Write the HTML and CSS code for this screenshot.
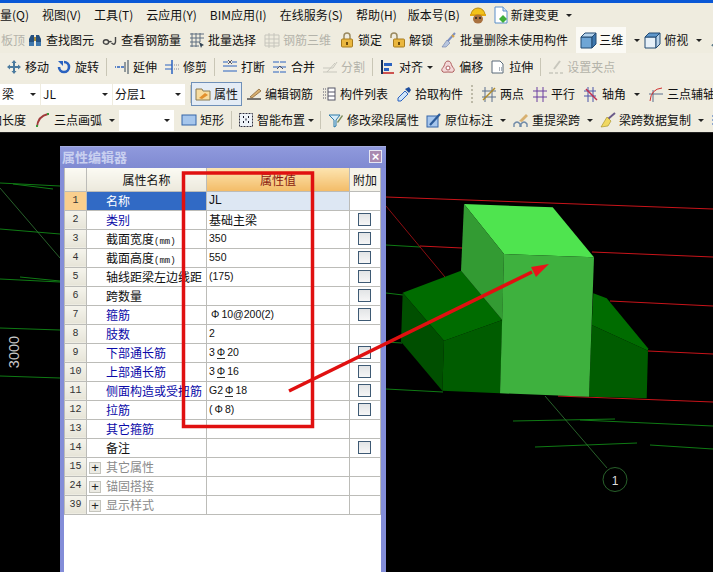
FILE: index.html
```html
<!DOCTYPE html>
<html lang="zh">
<head>
<meta charset="utf-8">
<title>属性编辑器</title>
<link rel="stylesheet" href="styles.css">
</head>
<body>
<svg class="defs" width="0" height="0">
  <symbol id="i-helmet" viewBox="0 0 18 18"><path d="M2 9a7 7 0 0 1 14 0z" fill="#f2c21a" stroke="#b98a10"/><rect x="1" y="8" width="16" height="2" fill="#e2a80f"/><ellipse cx="9" cy="13" rx="5" ry="4.5" fill="#a9713f"/><circle cx="7" cy="12" r="1" fill="#222"/><circle cx="11" cy="12" r="1" fill="#222"/></symbol>
  <symbol id="i-doc" viewBox="0 0 18 18"><path d="M3 1h8l4 4v12H3z" fill="#fff" stroke="#5b8fc9"/><path d="M11 1v4h4" fill="#cfe0f2" stroke="#5b8fc9"/><path d="M11 9l4 4-4 4-4-4z" fill="#3fae3a"/></symbol>
  <symbol id="i-binoc" viewBox="0 0 16 16"><path d="M2 14V7l2-4h3v11zM14 14V7l-2-4H9v11z" fill="#25507f"/><rect x="7" y="5" width="2" height="4" fill="#a88a3a"/><rect x="2" y="10" width="5" height="4" fill="#3f78ad"/><rect x="9" y="10" width="5" height="4" fill="#3f78ad"/></symbol>
  <symbol id="i-glass" viewBox="0 0 16 16"><g fill="none" stroke="#444" stroke-width="1.4"><ellipse cx="4" cy="10" rx="2.6" ry="2.2"/><path d="M6.500 10q2-1 3 0"/><path d="M9.500 11q3 3 4-1l0-5"/></g></symbol>
  <symbol id="i-select" viewBox="0 0 16 16"><g fill="none" stroke="#5f6f80"><path d="M1 2h14M1 6h14M1 10h10M1 14h9M3 1v14M7 1v14M11 1v9"/></g><path d="M10 10l5 3-2 1-1 2z" fill="#345"/></symbol>
  <symbol id="i-grid" viewBox="0 0 16 16"><g fill="none" stroke="#c6c5bc"><path d="M1 3h14v11H1zM1 7h14M1 11h14M5 1v15M10 1v15"/></g></symbol>
  <symbol id="i-lock" viewBox="0 0 16 16"><path d="M5 7V4a3 3 0 0 1 6 0v3" fill="none" stroke="#9a8a60" stroke-width="1.500"/><rect x="2.500" y="7" width="11" height="8" rx="1" fill="#eab73f" stroke="#a87c1e"/><rect x="7" y="10" width="2" height="3" fill="#6b4b0c"/></symbol>
  <symbol id="i-unlock" viewBox="0 0 16 16"><path d="M1 6V4a3 3 0 0 1 6 0v3" fill="none" stroke="#9a8a60" stroke-width="1.500"/><rect x="3.500" y="7" width="11" height="8" rx="1" fill="#eab73f" stroke="#a87c1e"/><rect x="8" y="10" width="2" height="3" fill="#6b4b0c"/></symbol>
  <symbol id="i-broom" viewBox="0 0 16 16"><path d="M14 1L6 10" stroke="#7b8fc2" stroke-width="2"/><path d="M6 8l3 3-4 4H1z" fill="#b7c5de" stroke="#6b7ea8" stroke-width=".6"/><path d="M11 3l2 2" stroke="#d4a24a" stroke-width="2"/></symbol>
  <symbol id="i-cube" viewBox="0 0 18 18"><path d="M1 6h11v11H1z" fill="#6fa6d6" stroke="#234a72"/><path d="M1 6l4-4h11l-4 4z" fill="#b5d3ec" stroke="#234a72"/><path d="M12 6l4-4v11l-4 4z" fill="#3d77ad" stroke="#234a72"/></symbol>
  <symbol id="i-cube2" viewBox="0 0 18 18"><path d="M1 6h11v11H1z" fill="#e6f0f8" stroke="#234a72"/><path d="M1 6l4-4h11l-4 4z" fill="#5f97cb" stroke="#234a72"/><path d="M12 6l4-4v11l-4 4z" fill="#b9d3ea" stroke="#234a72"/></symbol>
  <symbol id="i-green" viewBox="0 0 16 16"><circle cx="9" cy="6" r="5" fill="#4aa648"/><path d="M6 9l-4 5" stroke="#5a7a8a" stroke-width="2"/></symbol>
  <symbol id="i-move" viewBox="0 0 16 16"><path d="M8 1l2.500 3H9v3h3V5.500L15 8l-3 2.500V9H9v3h1.500L8 15l-2.500-3H7V9H4v1.500L1 8l3-2.500V7h3V4H5.500z" fill="#4b7a9e"/></symbol>
  <symbol id="i-rotate" viewBox="0 0 16 16"><path d="M8 3a5 5 0 1 1-5 5" fill="none" stroke="#2a62c0" stroke-width="2.600"/><path d="M2 2l5 0 0 5z" fill="#2a62c0"/></symbol>
  <symbol id="i-extend" viewBox="0 0 16 16"><path d="M10 8H1" stroke="#2a62c0" stroke-width="1.500" stroke-dasharray="3 1"/><path d="M11 3v10M14 1v14" stroke="#345" fill="none"/></symbol>
  <symbol id="i-trim" viewBox="0 0 16 16"><path d="M1 6h7M1 10h7" stroke="#2a62c0"/><path d="M8 1v14" stroke="#2a62c0" stroke-width="1.500"/><path d="M10 6h5M10 10h5" stroke="#889" stroke-dasharray="1 1"/></symbol>
  <symbol id="i-break" viewBox="0 0 16 16"><path d="M1 3h5M10 3h5M1 7h14M1 12h14" stroke="#2a62c0" fill="none"/><path d="M6 1l2 2-2 2M10 1L8 3l2 2" fill="none" stroke="#556"/></symbol>
  <symbol id="i-merge" viewBox="0 0 16 16"><path d="M1 3h14M1 8h14M1 13h14" stroke="#2a62c0" stroke-dasharray="6 1"/><path d="M5 10l3-3 3 3" fill="none" stroke="#556"/></symbol>
  <symbol id="i-split" viewBox="0 0 16 16"><path d="M1 13h14M1 9h10l4-6M5 13l8-9" stroke="#c8c7bd" fill="none"/></symbol>
  <symbol id="i-align" viewBox="0 0 16 16"><path d="M2 1v14" stroke="#14305a" stroke-width="2"/><rect x="4" y="4" width="8" height="3" fill="#2a62c0"/><path d="M3 14h11" stroke="#c02020" stroke-width="1.500"/><rect x="4" y="9" width="5" height="3" fill="#2a62c0"/></symbol>
  <symbol id="i-offset" viewBox="0 0 16 16"><path d="M8 2c3 0 3 3 4 5s3 3 2 5-3 1-6 1-5 1-6-1 1-3 2-5 1-5 4-5z" fill="#f3d8d8" stroke="#b06060"/><circle cx="8" cy="9" r="2" fill="#fff" stroke="#b06060"/></symbol>
  <symbol id="i-stretch" viewBox="0 0 16 16"><path d="M2 2h8l3 3v9H2z" fill="#fff" stroke="#5a6a7a"/><path d="M9 9h3M9 11h3" stroke="#5a6a7a" stroke-dasharray="1 1"/></symbol>
  <symbol id="i-gripset" viewBox="0 0 16 16"><path d="M12 2L6 10" stroke="#c8c7bd" stroke-width="2"/><path d="M1 14h4M7 14h3M12 14h3" stroke="#c8c7bd" stroke-width="1.500"/></symbol>
  <symbol id="i-attr" viewBox="0 0 16 16"><path d="M1 3h6l1 2h7v9H1z" fill="#f7dca0" stroke="#8a7a50"/><path d="M4 12l6-5 3 2-6 4z" fill="#e2902e"/></symbol>
  <symbol id="i-pencil" viewBox="0 0 16 16"><path d="M1 13h14" stroke="#222" stroke-width="1.200"/><path d="M4 11L13 3l2 2-9 7z" fill="#d8b070" stroke="#80592a" stroke-width=".7"/></symbol>
  <symbol id="i-list" viewBox="0 0 16 16"><rect x="7" y="2" width="7" height="12" fill="#fff" stroke="#556"/><path d="M7 6h7M7 10h7" stroke="#556"/><path d="M2 3h3M2 6h3M2 9h3M2 12h3" stroke="#556" stroke-dasharray="1 1"/></symbol>
  <symbol id="i-dropper" viewBox="0 0 16 16"><path d="M9 5l3 3-7 7H2v-3z" fill="#cfe4f7" stroke="#2a62c0"/><path d="M9 3l4 4 2-3-2-3z" fill="#1f4f9e"/></symbol>
  <symbol id="i-two" viewBox="0 0 16 16"><path d="M4 1v15M11 1v15M1 5h14M1 11h14" stroke="#5a6e8c"/><path d="M2 14L14 2" stroke="#b08a28" stroke-width="1.500"/></symbol>
  <symbol id="i-par" viewBox="0 0 16 16"><path d="M5 1v15M11 1v15M1 5h14M1 11h14" stroke="#6a3fa0"/></symbol>
  <symbol id="i-angle" viewBox="0 0 16 16"><path d="M5 1v15M10 1v15M1 5h12M1 10h12" stroke="#4a55a8"/><path d="M3 3l11 11" stroke="#c03050" stroke-width="1.500"/></symbol>
  <symbol id="i-tri" viewBox="0 0 16 16"><path d="M5 4v12M1 8h14" stroke="#5a6e8c"/><path d="M2 15Q3 3 14 2" fill="none" stroke="#d03030"/></symbol>
  <symbol id="i-arc" viewBox="0 0 16 16"><path d="M2 15Q3 4 13 2" fill="none" stroke="#a03a3a" stroke-width="1.800"/><rect x="1" y="13" width="2" height="2" fill="#3a9a3a"/><rect x="12" y="1" width="2" height="2" fill="#3a9a3a"/></symbol>
  <symbol id="i-rect" viewBox="0 0 16 16"><rect x="1" y="3" width="14" height="10" fill="#a6c6ec" stroke="#3565a8"/></symbol>
  <symbol id="i-smart" viewBox="0 0 16 16"><rect x="1.500" y="1.500" width="13" height="13" fill="#eef3f8" stroke="#334" stroke-dasharray="2 1"/><path d="M5 5h1M10 5h1M5 10h1M10 10h1M7.500 7.500h1" stroke="#112" stroke-width="2"/></symbol>
  <symbol id="i-funnel" viewBox="0 0 16 16"><path d="M1 3h11L8 8v6l-2 1V8z" fill="#d8ecf8" stroke="#2a7aa8"/><path d="M9 10l5-7 1 1-5 7z" fill="#7a8a5a"/></symbol>
  <symbol id="i-mark" viewBox="0 0 16 16"><rect x="1" y="4" width="11" height="11" fill="#a6c6ec" stroke="#3565a8"/><path d="M4 13L14 2" stroke="#2a5a98" stroke-width="2.200"/></symbol>
  <symbol id="i-span" viewBox="0 0 16 16"><path d="M1 15v-3q3-4 6 0v3M8 15v-3q3-4 6 0v3" fill="none" stroke="#708aa8" stroke-width="1.400"/><path d="M6 9l7-7 2 2-6 6z" fill="#d8b070"/></symbol>
  <symbol id="i-brush" viewBox="0 0 16 16"><path d="M15 1L8 7" stroke="#6a5a8a" stroke-width="2"/><path d="M7 5l4 4-3 5-7 1z" fill="#f0d860" stroke="#a08a20" stroke-width=".6"/></symbol>
  <symbol id="i-more" viewBox="0 0 16 16"><path d="M1 4h6M1 8h6M1 12h6" stroke="#2a62c0"/></symbol>
</svg>

<div class="page">
  <div class="titlebar"></div>

  <div class="tb tb-menu">
    <span class="mi">量(Q)</span><span class="mi">视图(V)</span><span class="mi">工具(T)</span><span class="mi">云应用(Y)</span><span class="mi">BIM应用(I)</span><span class="mi">在线服务(S)</span><span class="mi mi-h">帮助(H)</span><span class="mi">版本号(B)</span>
    <svg class="ic18 helmet"><use href="#i-helmet"/></svg>
    <span class="t t-doc"><svg class="ic18"><use href="#i-doc"/></svg>新建变更</span><i class="ar ar-menu"></i>
  </div>

  <div class="tb tb-2">
    <span class="cut1 off">板顶</span>
    <span class="t"><svg class="ic"><use href="#i-binoc"/></svg>查找图元</span>
    <span class="t"><svg class="ic"><use href="#i-glass"/></svg>查看钢筋量</span>
    <span class="t"><svg class="ic"><use href="#i-select"/></svg>批量选择</span>
    <span class="t off"><svg class="ic"><use href="#i-grid"/></svg>钢筋三维</span>
    <span class="t"><svg class="ic"><use href="#i-lock"/></svg>锁定</span>
    <span class="t"><svg class="ic"><use href="#i-unlock"/></svg>解锁</span>
    <span class="t"><svg class="ic"><use href="#i-broom"/></svg>批量删除未使用构件</span>
    <span class="view"><svg class="ic18"><use href="#i-cube"/></svg>三维</span><i class="ar ar-view"></i>
    <span class="t t-top"><svg class="ic18"><use href="#i-cube2"/></svg>俯视</span><i class="ar"></i>
    <svg class="ic"><use href="#i-green"/></svg>
  </div>

  <div class="tb tb-3">
    <span class="t"><svg class="ic"><use href="#i-move"/></svg>移动</span>
    <span class="t"><svg class="ic"><use href="#i-rotate"/></svg>旋转</span>
    <i class="sep"></i>
    <span class="t"><svg class="ic"><use href="#i-extend"/></svg>延伸</span>
    <span class="t"><svg class="ic"><use href="#i-trim"/></svg>修剪</span>
    <i class="sep"></i>
    <span class="t"><svg class="ic"><use href="#i-break"/></svg>打断</span>
    <span class="t"><svg class="ic"><use href="#i-merge"/></svg>合并</span>
    <span class="t off"><svg class="ic"><use href="#i-split"/></svg>分割</span>
    <i class="sep"></i>
    <span class="t"><svg class="ic"><use href="#i-align"/></svg>对齐</span><i class="ar ar-n"></i>
    <span class="t"><svg class="ic"><use href="#i-offset"/></svg>偏移</span>
    <span class="t"><svg class="ic"><use href="#i-stretch"/></svg>拉伸</span>
    <i class="sep"></i>
    <span class="t off"><svg class="ic"><use href="#i-gripset"/></svg>设置夹点</span>
  </div>

  <div class="tb tb-4">
    <span class="combo c1">梁<i class="ar"></i></span>
    <span class="combo c2">JL<i class="ar"></i></span>
    <span class="combo c3">分层1<i class="ar"></i></span>
    <i class="sep"></i>
    <span class="t active"><svg class="ic"><use href="#i-attr"/></svg>属性</span>
    <span class="t"><svg class="ic"><use href="#i-pencil"/></svg>编辑钢筋</span>
    <span class="t"><svg class="ic"><use href="#i-list"/></svg>构件列表</span>
    <span class="t"><svg class="ic"><use href="#i-dropper"/></svg>拾取构件</span>
    <i class="grip"></i>
    <span class="t"><svg class="ic"><use href="#i-two"/></svg>两点</span>
    <span class="t"><svg class="ic"><use href="#i-par"/></svg>平行</span>
    <span class="t"><svg class="ic"><use href="#i-angle"/></svg>轴角</span><i class="ar"></i>
    <span class="t"><svg class="ic"><use href="#i-tri"/></svg>三点辅轴</span>
  </div>

  <div class="tb tb-5">
    <span class="cut2">加长度</span>
    <span class="t"><svg class="ic"><use href="#i-arc"/></svg>三点画弧</span><i class="ar ar-arc"></i>
    <span class="combo c4"><i class="ar"></i></span>
    <span class="t"><svg class="ic"><use href="#i-rect"/></svg>矩形</span>
    <i class="sep"></i>
    <span class="t t-smart"><svg class="ic"><use href="#i-smart"/></svg>智能布置</span><i class="ar ar-smart"></i>
    <i class="sep"></i>
    <span class="t"><svg class="ic"><use href="#i-funnel"/></svg>修改梁段属性</span>
    <span class="t"><svg class="ic"><use href="#i-mark"/></svg>原位标注</span><i class="ar"></i>
    <span class="t"><svg class="ic"><use href="#i-span"/></svg>重提梁跨</span><i class="ar"></i>
    <span class="t"><svg class="ic"><use href="#i-brush"/></svg>梁跨数据复制</span><i class="ar"></i>
    <svg class="ic"><use href="#i-more"/></svg>
  </div>

  <main class="canvas">
    <svg class="scene" viewBox="0 133 713 439">
      <g class="ln-g">
        <path d="M0 183L60 186M13 184L53 189M0 229L60 234M0 279L60 282M20 277L60 281M0 328L60 330M0 376L60 378"/>
        <path d="M386 245L420 247M386 293L403 295M386 342L402 343M386 389L443 392"/>
        <path d="M513 421L615 419M580 420L713 426M535 447L637 443M650 445L713 449"/>
      </g>
      <g class="ln-thin">
        <path d="M0 188L60 258M545 396L607 468"/>
        <circle cx="615" cy="479.500" r="12"/>
      </g>
      <g class="ln-r">
        <path d="M386 197L713 209M420 246L462 248M592 252L713 257M610 301L713 306M648 351L713 354M558 396L713 402"/>
        <path class="ln-r-thin" d="M386 206L445 277"/>
      </g>
      <polygon class="d1" points="402.700,292.700 461,270.700 502.300,320 444,340.700"/>
      <polygon class="d2" points="402.700,292.700 444,340.700 442.300,390.700 401,341.700"/>
      <polygon class="d3" points="444,340.700 502.300,320 500,393.300 442.300,390.700"/>
      <polygon class="d1" points="593.300,293.300 606.700,298.300 648,348.300 648,350.700 591.700,325"/>
      <polygon class="d3" points="591.700,325 648,350.700 646.700,398.300 589,396.700"/>
      <polygon class="l1" points="464,204 552.700,207.300 594,257.300 504,254"/>
      <polygon class="l2" points="464,204 504,254 502.300,320 461,270.700"/>
      <polygon class="l3" points="504,254 594,257.300 589,396.700 500,393.300"/>
      <text class="axis-n" x="615" y="484.500">1</text>
      <text class="dim" transform="translate(19 352) rotate(-90)">3000</text>
    </svg>

    <section class="dialog">
      <header class="dlg-title"><span>属性编辑器</span><b class="close">×</b></header>
      <div class="dlg-body">
        <table class="grid">
          <thead>
            <tr><th class="n"></th><th class="h-name">属性名称</th><th class="h-val">属性值</th><th class="h-add">附加</th></tr>
          </thead>
          <tbody>
            <tr class="sel"><td class="n">1</td><td class="k">名称</td><td class="v">JL</td><td></td></tr>
            <tr><td class="n">2</td><td class="k blue">类别</td><td class="v v-cjk">基础主梁</td><td><i class="cb"></i></td></tr>
            <tr><td class="n">3</td><td class="k">截面宽度<small>(mm)</small></td><td class="v">350</td><td><i class="cb"></i></td></tr>
            <tr><td class="n">4</td><td class="k">截面高度<small>(mm)</small></td><td class="v">550</td><td><i class="cb"></i></td></tr>
            <tr><td class="n">5</td><td class="k">轴线距梁左边线距</td><td class="v">(175)</td><td><i class="cb"></i></td></tr>
            <tr><td class="n">6</td><td class="k">跨数量</td><td class="v"></td><td><i class="cb"></i></td></tr>
            <tr><td class="n">7</td><td class="k blue">箍筋</td><td class="v"><span class="rb">Φ</span>10@200(2)</td><td><i class="cb"></i></td></tr>
            <tr><td class="n">8</td><td class="k blue">肢数</td><td class="v">2</td><td></td></tr>
            <tr><td class="n">9</td><td class="k blue">下部通长筋</td><td class="v">3<span class="rb rb2">Φ</span>20</td><td><i class="cb"></i></td></tr>
            <tr><td class="n">10</td><td class="k blue">上部通长筋</td><td class="v">3<span class="rb rb2">Φ</span>16</td><td><i class="cb"></i></td></tr>
            <tr><td class="n">11</td><td class="k blue">侧面构造或受扭筋</td><td class="v">G2<span class="rb rb2">Φ</span>18</td><td><i class="cb"></i></td></tr>
            <tr><td class="n">12</td><td class="k blue">拉筋</td><td class="v"> (<span class="rb">Φ</span>8)</td><td><i class="cb"></i></td></tr>
            <tr><td class="n">13</td><td class="k blue">其它箍筋</td><td class="v"></td><td></td></tr>
            <tr><td class="n">14</td><td class="k">备注</td><td class="v"></td><td><i class="cb"></i></td></tr>
            <tr class="grp"><td class="n">15</td><td class="k"><i class="plus">+</i>其它属性</td><td class="v"></td><td></td></tr>
            <tr class="grp"><td class="n">24</td><td class="k"><i class="plus">+</i>锚固搭接</td><td class="v"></td><td></td></tr>
            <tr class="grp"><td class="n">39</td><td class="k"><i class="plus">+</i>显示样式</td><td class="v"></td><td></td></tr>
          </tbody>
        </table>
      </div>
    </section>

    <svg class="notes" viewBox="0 133 713 439">
      <rect class="note-box" x="183.500" y="173" width="129" height="253.500"/>
      <path class="note-line" d="M289 391L532 272"/>
      <polygon class="note-head" points="549,264 531,267 536,277"/>
    </svg>
  </main>
</div>
</body>
</html>
```
FILE: styles.css
```css
* { box-sizing: border-box; }
html, body { margin: 0; padding: 0; }
body { width: 713px; height: 572px; overflow: hidden; background: #000; font: 12px/16px "Noto Sans CJK SC", "Liberation Sans", sans-serif; color: #111; }
.defs { position: absolute; }
.page { width: 713px; height: 572px; display: flex; flex-direction: column; overflow: hidden; }
.titlebar { height: 3px; background: #0a58d6; flex: none; }

.tb { display: flex; align-items: center; gap: 8px; flex: none; background: #efecdf; white-space: nowrap; overflow: hidden; }
.tb > * { flex: none; }
.tb-menu { height: 24px; gap: 13px; }
.tb-2 { height: 26px; }
.tb-3 { height: 27px; gap: 7px; padding: 1px 0 0 6px; background: #f1eee3; }
.tb-4 { height: 27px; padding-top: 1px; }
.tb-5 { height: 26px; gap: 7px; padding-top: 1px; border-bottom: 1px solid #222; }

.t { display: inline-flex; align-items: center; gap: 3px; }
.off { color: #b4b3aa; }
.ic { width: 16px; height: 16px; flex: none; }
.ic18 { width: 18px; height: 18px; flex: none; }
.mi-h { margin-right: -2px; }
.helmet { margin-left: -4px; }
.t-doc { margin-left: -8px; gap: 1px; }
.ar-menu { margin-left: -6px; }
.cut1 { margin-left: 1px; margin-right: -6px; }
.cut2 { margin-left: -10px; margin-right: 2px; }
.view { display: inline-flex; align-items: center; gap: 1px; height: 26px; padding: 0 3px 0 4px; background: #fbfaf5; }
.ar { display: block; width: 0; height: 0; border: 3px solid transparent; border-top: 3px solid #222; border-bottom-width: 0; }
.ar-view { margin-right: -4px; }
.t-top { gap: 2px; }
.ar-n { margin-left: -3px; }
.ar-arc { margin-right: -3px; }
.ar-smart { margin: 0 -1px 0 -4px; }
.t-smart { margin-left: -1px; }
.sep { display: block; width: 1px; height: 18px; background: #c9c6b6; }
.grip { display: block; width: 2px; height: 18px; border-left: 2px dotted #bdbaa8; }

.combo { position: relative; display: block; height: 21px; line-height: 20px; padding-left: 2px; background: #fff; margin-right: -7px; }
.combo .ar { position: absolute; right: 4px; top: 9px; }
.c1 { width: 40px; }
.c2 { width: 71px; }
.c3 { width: 72px; }
.c4 { width: 55px; margin-right: 0; }
.tb-4 .c3 { margin-right: -3px; }
.tb-4 .sep + .active { margin-left: -8px; }
.active { height: 24px; width: 51px; padding-left: 3px; background: #e4ecf5; border: 1px solid #6f90b8; margin-right: -4px; }

.canvas { position: relative; flex: 1; background: #000; overflow: hidden; }
.scene, .notes { position: absolute; left: 0; top: 0; width: 713px; height: 439px; }
.notes { pointer-events: none; }
.ln-g { fill: none; stroke: #0f7a14; stroke-width: 1; }
.ln-thin { fill: none; stroke: #3a8a3c; stroke-width: .7; }
.ln-r { fill: none; stroke: #c8141a; stroke-width: 1; }
.ln-r-thin { stroke-width: .7; }
.d1 { fill: #006c00; }
.d2 { fill: #004f00; }
.d3 { fill: #005c00; }
.l1 { fill: #4fe44f; }
.l2 { fill: #339b33; }
.l3 { fill: #3eb13e; }
.axis-n { fill: #ddd; font: 12px "Liberation Sans", sans-serif; text-anchor: middle; }
.dim { fill: #c8c8c8; font: 14.500px "Liberation Sans", sans-serif; text-anchor: middle; }

.dialog { position: absolute; left: 60px; top: 13px; bottom: 0; width: 326px; display: flex; flex-direction: column; background: #838dd8; border-top: 1px solid #a4acdf; }
.dlg-title { flex: none; height: 21px; display: flex; align-items: center; justify-content: space-between; padding: 0 4px 2px 2px; font-size: 13px; font-weight: 700; color: #c9d0f0; background: linear-gradient(#8f99dc, #7f8ad2); }
.close { display: block; width: 13px; height: 13px; line-height: 11px; text-align: center; font: 700 13px/12px "Liberation Sans", sans-serif; color: #fff; background: #a98ab0; border: 1px solid #e6e6f2; }
.dlg-body { flex: 1; margin: 0 5px 0 4px; background: #fff; }

.grid { width: 316px; table-layout: fixed; border-collapse: collapse; }
.grid th, .grid td { padding: 0; border: 1px solid #bcbcb8; height: 19px; line-height: 17px; font-weight: 400; overflow: hidden; white-space: nowrap; }
.grid thead th { height: 23px; border-top: 0; background: linear-gradient(#fbfaf3, #ece9dc); text-align: center; }
.grid th.n { width: 22px; }
.grid th.h-name { width: 120px; }
.grid th.h-val { width: 143px; background: linear-gradient(#fce4b0, #f3bc68); color: #8a1a10; }
.grid th.h-add { width: 31px; background: #f5f3ea; }
.grid td.n { text-align: center; background: linear-gradient(#f5f4ec, #e6e4d8); font: 10px/17px "Liberation Mono", monospace; color: #333; }
.k { padding-left: 19px !important; }
.v { padding-left: 2px !important; font: 10.500px/17px "Liberation Sans", sans-serif; }
.v-cjk { font: 12px/17px "Noto Sans CJK SC", sans-serif; }
.grid td:last-child { text-align: left; }
.k small { font: 9px "Liberation Mono", monospace; }
.blue { color: #0a0aa8; }
.sel .k { background: #316ac5; color: #fff; }
.sel .v { background: #dde7f3; font-size: 12px; }
.grid .sel td.n { background: #f9cf8e; }
.grp .k { color: #8a8a8a; padding-left: 2px !important; }
.grp .k .plus { display: inline-block; vertical-align: middle; width: 12px; height: 12px; margin: -1px 5px 0 0; background: #ecebe4; border: 1px solid #c4c4bc; color: #222; font: 13px/10px "Liberation Sans", sans-serif; text-align: center; }
.cb { display: block; width: 13px; height: 13px; margin-left: 8px; background: linear-gradient(#e2e4e6, #f6f6f6); border: 1px solid #3e5a74; }
.rb { font: 10.500px "Liberation Sans", sans-serif; margin: 0 2px; }
.rb2 { border-bottom: 1px solid #333; }

.note-box { fill: none; stroke: #e01010; stroke-width: 3.500; }
.note-line { fill: none; stroke: #e01010; stroke-width: 3.500; }
.note-head { fill: #e8141a; }
```
